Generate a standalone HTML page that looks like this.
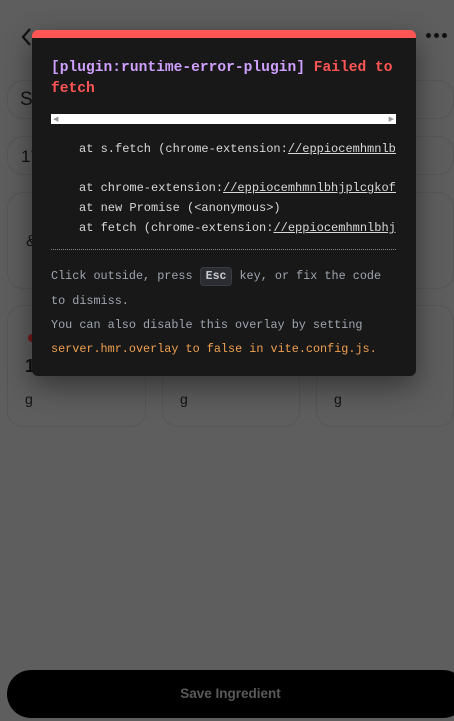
<!DOCTYPE html>
<html><head><style>
*{margin:0;padding:0;box-sizing:border-box}
body{width:454px;height:721px;background:#5e5e5e;position:relative;overflow:hidden;font-family:"Liberation Sans",sans-serif}
.card{position:absolute;border:1px solid #575757;border-radius:16px}
.mono{font-family:"Liberation Mono",monospace}
.ov{position:absolute;left:32px;top:30px;width:384px;height:346px;background:#181818;border-radius:6px;border-top:8px solid #ff5555;box-shadow:0 10px 30px rgba(0,0,0,.45);overflow:hidden}
.t{position:absolute;left:19px;top:20px;width:350px;font-size:14.6px;font-weight:bold;line-height:21px;color:#ff5555}
.t span{color:#cfa0ff}
.sb{position:absolute;left:19px;top:76px;width:345px;height:10px;background:#fff}
.st{position:absolute;left:47px;font-size:12px;color:#d8d8d8;white-space:nowrap;width:317px;overflow:hidden}
.st u{color:#d8d8d8}
.hr{position:absolute;left:19px;top:211px;width:345px;border-top:1px dotted #888}
.f{position:absolute;left:19px;top:226px;width:350px;font-size:11.8px;line-height:24px;color:#9fa6b0}
.f b{font-weight:normal;color:#f0a050}
kbd{font-family:"Liberation Mono",monospace;font-weight:bold;background:#2b2d33;border:1px solid #3a3c42;border-radius:4px;padding:2px 5px;color:#c8ccd2;font-size:11.5px}
</style></head><body>
<svg style="position:absolute;left:20px;top:27px" width="14" height="20" viewBox="0 0 14 20"><path d="M10 2 L3 10 L10 18" fill="none" stroke="#111" stroke-width="2.2"/></svg>
<div style="position:absolute;left:426px;top:33px;display:flex;gap:3px"><i style="width:5px;height:5px;border-radius:50%;background:#111;display:block"></i><i style="width:5px;height:5px;border-radius:50%;background:#111;display:block"></i><i style="width:5px;height:5px;border-radius:50%;background:#111;display:block"></i></div>
<div class="card" style="left:7px;top:80px;width:447px;height:39px"><span style="position:absolute;left:12px;top:8px;font-size:19px;color:#111">St</span></div>
<div class="card" style="left:7px;top:136px;width:447px;height:39px"><span style="position:absolute;left:13px;top:10px;font-size:17px;color:#111">17</span></div>
<div class="card" style="left:7px;top:192px;width:447px;height:97px"><span style="position:absolute;left:18px;top:40px;font-size:16px;color:#111">&amp;</span></div>
<div class="card" style="left:7px;top:305px;width:139px;height:122px"><i style="position:absolute;left:20px;top:28px;width:8px;height:8px;border-radius:50%;background:#7a1a1a"></i><span style="position:absolute;left:17px;top:50px;font-size:18px;font-weight:bold;color:#111">1</span><span style="position:absolute;left:17px;top:85px;font-size:14px;color:#111">g</span></div>
<div class="card" style="left:162px;top:305px;width:138px;height:122px"><span style="position:absolute;left:17px;top:85px;font-size:14px;color:#111">g</span></div>
<div class="card" style="left:316px;top:305px;width:138px;height:122px"><span style="position:absolute;left:17px;top:85px;font-size:14px;color:#111">g</span></div>
<div style="position:absolute;left:7px;top:670px;width:460px;height:48px;border-radius:24px;background:#000;color:#5a5a5a;font-size:13.5px;font-weight:bold;text-align:center;line-height:48px;padding-right:13px">Save Ingredient</div>
<div class="ov">
<div class="t mono"><span>[plugin:runtime-error-plugin]</span> Failed to fetch</div>
<div class="sb"><span style="position:absolute;left:2px;top:1px;font-size:7px;color:#999">&#9664;</span><span style="position:absolute;right:2px;top:1px;font-size:7px;color:#999">&#9654;</span></div>
<div class="st mono" style="top:104px">at s.fetch (chrome-extension:<u>//eppiocemhmnlbhjplcgkofciiegomcon</u></div>
<div class="st mono" style="top:143px">at chrome-extension:<u>//eppiocemhmnlbhjplcgkofciiegomcon</u></div>
<div class="st mono" style="top:163px">at new Promise (&lt;anonymous&gt;)</div>
<div class="st mono" style="top:183px">at fetch (chrome-extension:<u>//eppiocemhmnlbhjplcgkofciiegomcon</u></div>
<div class="hr"></div>
<div class="f mono">Click outside, press <kbd>Esc</kbd> key, or fix the code<br>to dismiss.<br>You can also disable this overlay by setting<br><b>server.hmr.overlay</b> <b>to false in</b> <b>vite.config.js.</b></div>
</div>
</body></html>
